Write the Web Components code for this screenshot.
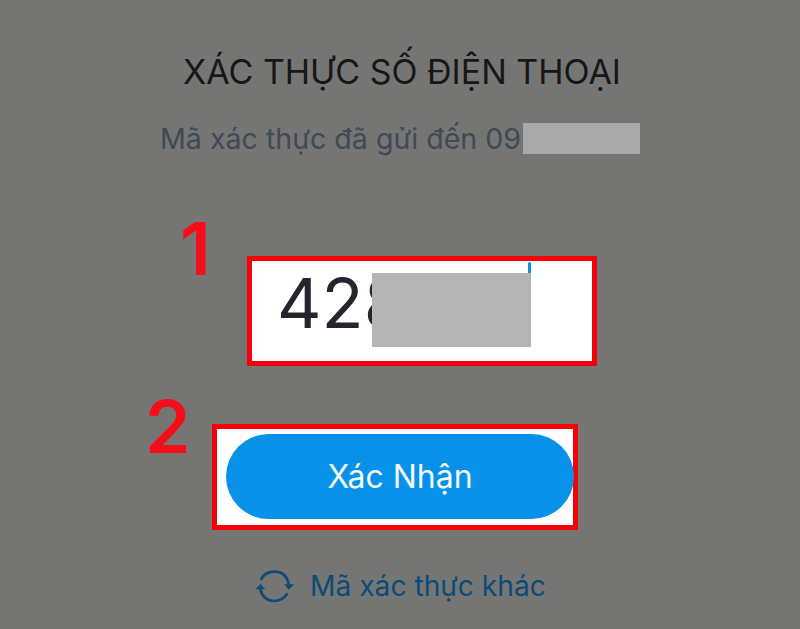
<!DOCTYPE html>
<html lang="vi">
  <head>
    <meta charset="utf-8" />
    <title>Xác thực số điện thoại</title>
    <style>
      html, body { margin: 0; padding: 0; }
      body { width: 800px; height: 629px; overflow: hidden; background: #757674; font-family: Inter, "Liberation Sans", sans-serif; }
    </style>
  </head>
  <body>
    <otp-screen>
      <verify-header title-text="XÁC THỰC SỐ ĐIỆN THOẠI" sent-text="Mã xác thực đã gửi đến 09"></verify-header>
      <code-field value="428" step="1"></code-field>
      <confirm-button step="2">Xác Nhận</confirm-button>
      <resend-link>Mã xác thực khác</resend-link>
    </otp-screen>

    <script>
      class OtpScreen extends HTMLElement {
        constructor() {
          super();
          this.attachShadow({mode: 'open'}).innerHTML = `
            <style>
              :host { display: flex; flex-direction: column; align-items: stretch; width: 800px; height: 629px; padding-top: 50px; box-sizing: border-box; }
            </style>
            <slot></slot>
          `;
        }
      }

      class VerifyHeader extends HTMLElement {
        constructor() {
          super();
          this.attachShadow({mode: 'open'}).innerHTML = `
            <style>
              :host { display: flex; flex-direction: column; align-items: flex-start; }
              h1 { margin: 0 0 0 183px; font-size: 34px; line-height: 44px; font-weight: 400; color: #161716; white-space: nowrap; }
              .sent { display: flex; align-items: center; height: 36px; margin: 26px 0 0 160px; font-size: 28.6px; color: #3f4a55; white-space: nowrap; }
              .mask { width: 117px; height: 31px; margin-left: 2px; background: #a9a9a9; }
            </style>
            <h1>${this.getAttribute('title-text')}</h1>
            <div class="sent"><span>${this.getAttribute('sent-text')}</span><span class="mask"></span></div>
          `;
        }
      }

      class CodeField extends HTMLElement {
        constructor() {
          super();
          this.attachShadow({mode: 'open'}).innerHTML = `
            <style>
              :host { display: block; position: relative; box-sizing: border-box; width: 350px; height: 110px; margin: 100px 0 0 247px; padding-left: 25px; border: 5px solid #f70007; background: #fff; }
              .value { font-size: 69px; line-height: 85px; color: #25262d; }
              .caret { position: absolute; left: 276px; top: 1px; width: 3px; height: 14px; border-radius: 1.5px; background: #0f8fe6; }
              .mask { position: absolute; left: 120px; top: 12px; width: 159px; height: 74px; background: #b5b5b5; }
              .step { position: absolute; left: -72px; top: -48px; font: 600 73px/72px Inter, sans-serif; color: #f70d1a; }
            </style>
            <div class="value">${this.getAttribute('value')}</div>
            <span class="caret"></span>
            <span class="mask"></span>
            <span class="step">${this.getAttribute('step')}</span>
          `;
        }
      }

      class ConfirmButton extends HTMLElement {
        constructor() {
          super();
          this.attachShadow({mode: 'open'}).innerHTML = `
            <style>
              :host { display: block; position: relative; box-sizing: border-box; width: 366px; height: 106px; margin: 58px 0 0 212px; padding: 5px 0 0 9px; border: 5px solid #f70007; background: #fff; }
              button { display: block; width: 348px; height: 85px; padding: 0; border: 0; border-radius: 43px; background: #0791e8; color: #f4f9fd; font: 400 32px Inter, "Liberation Sans", sans-serif; }
              .step { position: absolute; left: -72px; top: -38px; font: 600 73px/72px Inter, sans-serif; color: #f70d1a; }
            </style>
            <button><slot></slot></button>
            <span class="step">${this.getAttribute('step')}</span>
          `;
        }
      }

      class ResendLink extends HTMLElement {
        constructor() {
          super();
          this.attachShadow({mode: 'open'}).innerHTML = `
            <style>
              :host { display: flex; align-items: center; gap: 10px; height: 42px; margin: 35px 0 0 250px; color: #0c4b78; font-size: 28.2px; white-space: nowrap; }
              svg { width: 50px; height: 42px; flex: none; }
            </style>
            <svg viewBox="0 0 150 126" fill="none" stroke="#0c4b78" stroke-width="8" stroke-linecap="round">
              <path d="M34 42 C42 27 57 20 74 20 C96 20 112 34 117 60"/>
              <path d="M31 72 C35 94 51 108 72 108 C88 108 102 101 111 88"/>
              <path d="M102 58 L132 58 L117 74 Z" fill="#0c4b78" stroke="none"/>
              <path d="M16 73 L46 73 L31 57 Z" fill="#0c4b78" stroke="none"/>
            </svg>
            <span><slot></slot></span>
          `;
        }
      }

      window.customElements.define('otp-screen', OtpScreen);
      window.customElements.define('verify-header', VerifyHeader);
      window.customElements.define('code-field', CodeField);
      window.customElements.define('confirm-button', ConfirmButton);
      window.customElements.define('resend-link', ResendLink);
    </script>
  </body>
</html>
